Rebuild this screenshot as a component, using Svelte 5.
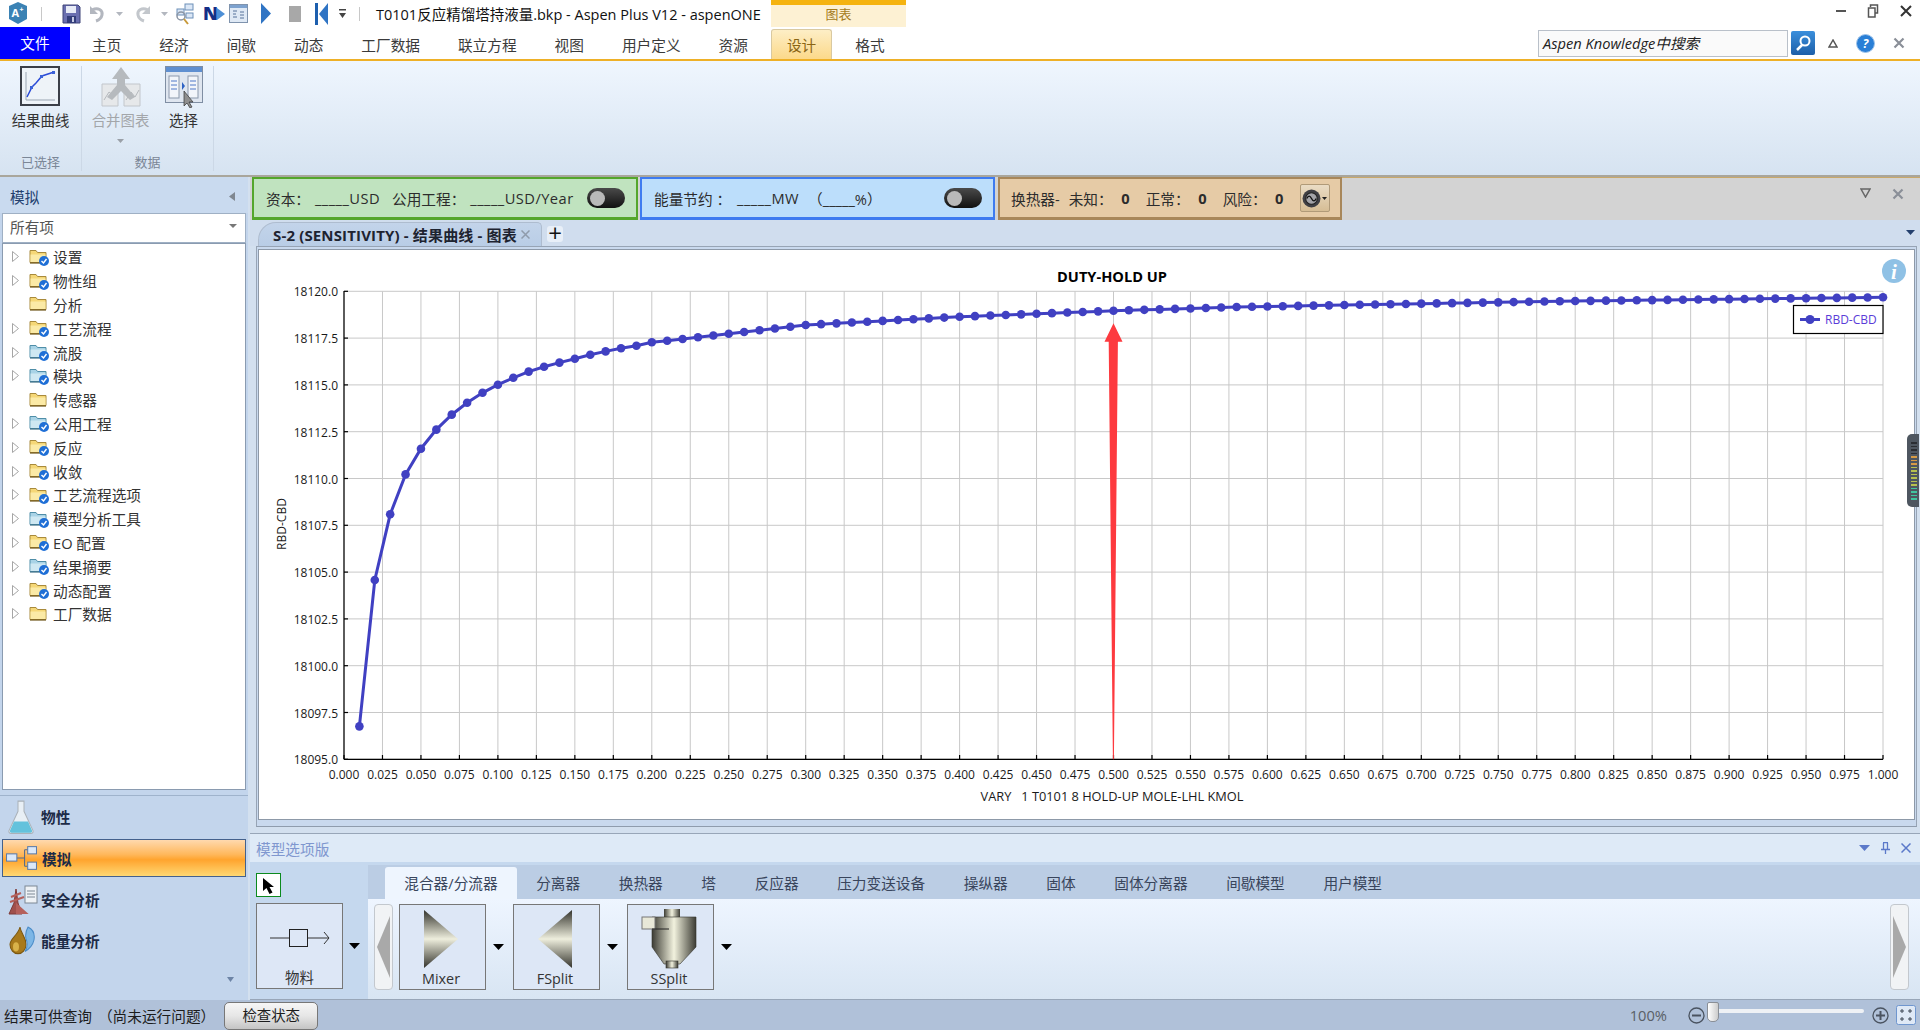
<script>
  const tabs = ['主页', '经济', '间歇', '动态', '工厂数据', '联立方程', '视图', '用户定义', '资源', '设计', '格式']
  const tree = [
    ['设置', 'y', true], ['物性组', 'y', true], ['分析', 'p', false], ['工艺流程', 'y', true],
    ['流股', 't', true], ['模块', 't', true], ['传感器', 'p', false], ['公用工程', 't', true],
    ['反应', 'y', true], ['收敛', 'y', true], ['工艺流程选项', 'y', true], ['模型分析工具', 't', true],
    ['EO 配置', 'y', true], ['结果摘要', 't', true], ['动态配置', 'y', true], ['工厂数据', 'p', true]
  ]
  const palTabs = ['混合器/分流器', '分离器', '换热器', '塔', '反应器', '压力变送设备', '操纵器', '固体', '固体分离器', '间歇模型', '用户模型']

  // plot area in page coordinates
  const X0 = 344, XW = 1539, Y0 = 759.3, YK = 18.72
  const px = (x) => X0 + x * XW
  const py = (v) => Y0 - (v - 18095) * YK

  const head = [18096.76, 18104.58, 18108.09, 18110.22, 18111.59, 18112.61, 18113.41, 18114.05, 18114.58, 18115.01,
    18115.38, 18115.71, 18115.97, 18116.19, 18116.4, 18116.61, 18116.79, 18116.96, 18117.09, 18117.28, 18117.36]
  const anchors = [[0.21, 18117.36], [0.3, 18118.2], [0.4, 18118.64], [0.5, 18118.96], [0.58, 18119.16], [0.7, 18119.34], [0.8, 18119.48], [1, 18119.68]]

  function valueAt(x) {
    for (let i = 1; i < anchors.length; i++) {
      if (x <= anchors[i][0]) {
        const [a, va] = anchors[i - 1]
        const [b, vb] = anchors[i]
        return va + ((x - a) / (b - a)) * (vb - va)
      }
    }
    return anchors[anchors.length - 1][1]
  }

  const points = []
  for (let i = 1; i <= 100; i++) {
    const x = i / 100
    points.push([px(x), py(i <= head.length ? head[i - 1] : valueAt(x))])
  }
  const line = points.map((p) => p[0].toFixed(1) + ',' + p[1].toFixed(1)).join(' ')
  const xTicks = Array.from({ length: 41 }, (_, i) => i * 0.025)
  const yTicks = Array.from({ length: 11 }, (_, i) => 18095 + i * 2.5)
</script>

{#snippet folder(kind)}
  <svg class="folder" width="20" height="18" viewBox="0 0 20 18">
    <path d="M1 14.500V2.500h6l1.500 2H17v10z" fill={kind === 't' ? '#a9d3e6' : '#f5d777'} stroke={kind === 't' ? '#4f8ea8' : '#a88a3c'} stroke-width="1" />
    <path d="M1.500 14V6.500h15V14z" fill={kind === 't' ? '#cfe8f2' : '#fbeaa6'} />
    <path d="M1 15h16" stroke={kind === 't' ? '#3d6f86' : '#6e5518'} stroke-width="1.200" />
    {#if kind !== 'p'}
      <circle cx="15" cy="13" r="5" fill="#1f6fd6" />
      <path d="M12.500 13l2 2 3-4" fill="none" stroke="#fff" stroke-width="1.400" />
    {/if}
  </svg>
{/snippet}

{#snippet drop()}
  <svg class="tri" width="11" height="6" viewBox="0 0 11 6"><path d="M0 0h11L5.500 6z" fill="#000" /></svg>
{/snippet}

{#snippet toggle()}
  <span class="toggle"><span class="knob"></span></span>
{/snippet}

{#snippet scroller(dir)}
  <span class="scroll-btn">
    <svg width="13" height="62" viewBox="0 0 13 62">
      <path d={dir === 'l' ? 'M13 0V62L0 31z' : 'M0 0V62L13 31z'} fill="#a9a9a9" />
    </svg>
  </span>
{/snippet}

<div class="app">
  <header class="titlebar">
    <svg class="q-logo" width="24" height="25" viewBox="0 0 24 25">
      <path d="M12 1l9 4v13l-9 5-9-5V5z" fill="#3b82b4" />
      <text x="5.500" y="16" font-size="11" font-weight="700" fill="#fff" font-family="Open Sans">A</text>
      <text x="13.500" y="11" font-size="7" font-weight="700" fill="#fff" font-family="Open Sans">+</text>
    </svg>
    <span class="q-sep q-sep1"></span>
    <svg class="q-save" width="19" height="20" viewBox="0 0 19 20">
      <path d="M1 1h15l2 2v16H1z" fill="#6a6fb0" stroke="#3e4478" />
      <rect x="4" y="2" width="10" height="7" fill="#e8ecf7" />
      <rect x="5" y="12" width="9" height="7" fill="#333d7a" /><rect x="10" y="13" width="2" height="5" fill="#c7cbe4" />
    </svg>
    <svg class="q-undo" width="16" height="18" viewBox="0 0 16 18">
      <path d="M3 5c6-3 11 0 10 5-.6 3-3 5-6 6" fill="none" stroke="#b3b7bf" stroke-width="3" /><path d="M1 1v8h8z" fill="#b3b7bf" />
    </svg>
    <svg class="q-dd1" width="7" height="4" viewBox="0 0 7 4"><path d="M0 0h7L3.500 4z" fill="#b3b7bf" /></svg>
    <svg class="q-redo" width="16" height="18" viewBox="0 0 16 18">
      <path d="M13 5C7 2 2 5 3 10c.6 3 3 5 6 6" fill="none" stroke="#c3c7cc" stroke-width="3" /><path d="M15 1v8H7z" fill="#c3c7cc" />
    </svg>
    <svg class="q-dd2" width="7" height="4" viewBox="0 0 7 4"><path d="M0 0h7L3.500 4z" fill="#b3b7bf" /></svg>
    <svg class="q-macro" width="20" height="22" viewBox="0 0 20 22">
      <rect x="10" y="1" width="8" height="6" fill="#dbe7f6" stroke="#6d8fb8" /><rect x="2" y="6" width="7" height="6" fill="#dbe7f6" stroke="#6d8fb8" /><rect x="11" y="10" width="7" height="5" fill="#dbe7f6" stroke="#6d8fb8" />
      <circle cx="6" cy="13" r="4" fill="none" stroke="#8a94a3" stroke-width="1.500" /><path d="M9 16l4 5" stroke="#c89a3a" stroke-width="2" />
    </svg>
    <svg class="q-n" width="23" height="26" viewBox="0 0 23 26">
      <text x="0" y="19" font-size="18" font-weight="800" fill="#142e86" font-family="Open Sans">N</text>
      <path d="M14 7l8 6-8 6z" fill="#4d8fd6" />
    </svg>
    <svg class="q-table" width="19" height="19" viewBox="0 0 19 19">
      <rect x=".5" y=".5" width="18" height="18" fill="#dfe9f5" stroke="#7f93ad" /><rect x="1" y="1" width="17" height="3" fill="#7da2cf" />
      <path d="M4 7h4M4 10h3M4 13h4M11 8h4M11 11h4M11 14h4" stroke="#56729a" />
    </svg>
    <svg class="q-play" width="10" height="21" viewBox="0 0 10 21"><path d="M0 0l10 10.500L0 21z" fill="#2f74c4" /></svg>
    <svg class="q-stop" width="12" height="16" viewBox="0 0 12 16"><rect width="12" height="16" fill="#a8a8a8" /></svg>
    <svg class="q-rew" width="13" height="22" viewBox="0 0 13 22"><rect width="3" height="22" fill="#1d5fae" /><path d="M13 0v22L4 11z" fill="#2f74c4" /></svg>
    <svg class="q-more" width="7" height="9" viewBox="0 0 7 9"><path d="M0 0h7v1.500H0zM0 4h7L3.500 9z" fill="#444" /></svg>
    <span class="q-sep q-sep2"></span>
    <span class="title">T0101反应精馏塔持液量.bkp - Aspen Plus V12 - aspenONE</span>
    <span class="context">图表</span>
    <span class="winbtns">
      <svg width="10" height="2" viewBox="0 0 10 2"><rect width="10" height="2" fill="#555" /></svg>
      <svg width="12" height="14" viewBox="0 0 12 14"><path d="M3.500 3V1h7v8H8M1.500 4h6.500v9h-6.500z" fill="none" stroke="#555" stroke-width="1.500" /></svg>
      <svg width="12" height="12" viewBox="0 0 12 12"><path d="M1 1l10 10M11 1L1 11" stroke="#333" stroke-width="2" /></svg>
    </span>
  </header>

  <nav class="tabbar">
    <span class="file-tab">文件</span>
    <div class="tabs">
      {#each tabs as t}
        <span class="tab" class:active={t === '设计'}>{t}</span>
      {/each}
    </div>
    <div class="search-area">
      <span class="search">Aspen Knowledge中搜索</span>
      <span class="search-btn">
        <svg width="18" height="18" viewBox="0 0 18 18"><circle cx="11" cy="7" r="4.500" fill="none" stroke="#fff" stroke-width="2" /><path d="M8 11l-5 5" stroke="#fff" stroke-width="2.500" /></svg>
      </span>
      <svg class="ic-up" width="10" height="9" viewBox="0 0 10 9"><path d="M5 1L1 8h8z" fill="none" stroke="#555" stroke-width="1.500" /></svg>
      <span class="help">?</span>
      <svg class="ic-x" width="12" height="12" viewBox="0 0 12 12"><path d="M1.500 1.500l9 9M10.500 1.500l-9 9" stroke="#8a8f98" stroke-width="2.200" /></svg>
    </div>
  </nav>

  <section class="ribbon">
    <div class="rgroup g1">
      <div class="rbtn b1">
        <svg width="40" height="40" viewBox="0 0 40 40">
          <rect x="1" y="1" width="38" height="38" fill="#eef3f8" stroke="#3b3f48" stroke-width="2" />
          <path d="M6 34h29M6 6v28" stroke="#9aa5b2" />
          <path d="M7 31l5-10 4-4 6-7 9-3 4-1" fill="none" stroke="#2b4bd8" stroke-width="1.500" />
          <rect x="10" y="20" width="3" height="3" fill="#3a62d8" /><rect x="20" y="9" width="3" height="3" fill="#3a62d8" /><rect x="32" y="5" width="3" height="3" fill="#3a62d8" />
        </svg>
        <span>结果曲线</span>
      </div>
      <span class="glabel">已选择</span>
    </div>
    <div class="rgroup g2">
      <div class="rbtns">
        <div class="rbtn b2 off">
          <svg width="40" height="42" viewBox="0 0 40 42">
            <path d="M1 18h16v22H1zM23 18h16v22H23z" fill="#e6e8ea" stroke="#c2c6cb" />
            <path d="M3 34l5-8 5 4 4-6M25 34l5-8 4 5 4-7" fill="none" stroke="#b5b9bd" />
            <path d="M20 1l9 12h-5v6l10 12-5 3-9-9-9 9-5-3 10-12v-6h-5z" fill="#b6babe" />
          </svg>
          <span>合并图表</span>
          <svg class="more" width="7" height="4" viewBox="0 0 7 4"><path d="M0 0h7L3.500 4z" fill="#9aa0a8" /></svg>
        </div>
        <div class="rbtn b3">
          <svg width="38" height="42" viewBox="0 0 38 42">
            <rect x=".5" y=".5" width="37" height="36" fill="#dfe6f0" stroke="#7f8ea3" />
            <rect x="1" y="1" width="36" height="5" fill="#5f8fd0" />
            <rect x="4" y="10" width="10" height="22" fill="#f2f5fa" stroke="#8b98ab" /><rect x="23" y="10" width="10" height="22" fill="#f2f5fa" stroke="#8b98ab" />
            <path d="M6 15h6M6 19h6M6 23h6M25 15h6M25 19h6M25 23h6" stroke="#4f78c8" />
            <path d="M17 16l3 4-3 4z" fill="#2e62c4" />
            <path d="M19 25v15l3-3 3 5 2-1-3-5h4z" fill="#8f8f8f" stroke="#333" stroke-width=".7" />
          </svg>
          <span>选择</span>
        </div>
      </div>
      <span class="glabel">数据</span>
    </div>
  </section>

  <main class="main">
    <aside class="side">
      <div class="side-head">
        <span>模拟</span>
        <svg width="7" height="9" viewBox="0 0 7 9"><path d="M6 0v9L0 4.500z" fill="#7f8790" /></svg>
      </div>
      <div class="side-select">
        <span>所有项</span>
        <svg width="8" height="4" viewBox="0 0 8 4"><path d="M0 0h8L4 4z" fill="#777" /></svg>
      </div>
      <ul class="tree">
        {#each tree as [label, kind, hasArrow]}
          <li>
            <span class="twisty">
              {#if hasArrow}
                <svg width="7" height="11" viewBox="0 0 7 11"><path d="M.5.500v10l6-5z" fill="#fff" stroke="#a6a6a6" /></svg>
              {/if}
            </span>
            {@render folder(kind)}
            <span class="tree-label">{label}</span>
          </li>
        {/each}
      </ul>
      <div class="nav-list">
        <div class="nav-item">
          <svg width="26" height="34" viewBox="0 0 26 30" preserveAspectRatio="none">
            <path d="M10 1h6v9l9 17c.5 1.500-.5 2.500-2 2.500H3C1.500 29.500.5 28.500 1 27l9-17z" fill="#e8eff5" stroke="#aab1b8" />
            <path d="M6 19h14l4 8c.4 1.200-.5 2-1.500 2h-19C2.500 29 1.600 28.200 2 27z" fill="#63c2dc" />
          </svg>
          <span>物性</span>
        </div>
        <div class="nav-item active">
          <svg width="31" height="26" viewBox="0 0 30 24">
            <path d="M10 12h8M18 4v16M18 4h4M18 20h4" stroke="#50698e" fill="none" />
            <rect x=".5" y="8" width="10" height="7" fill="#dbe8f8" stroke="#5c7ba8" /><rect x="21" y="1" width="8.500" height="7" fill="#dbe8f8" stroke="#5c7ba8" /><rect x="21" y="16" width="8.500" height="7" fill="#dbe8f8" stroke="#5c7ba8" />
          </svg>
          <span>模拟</span>
        </div>
        <div class="nav-item">
          <svg width="30" height="30" viewBox="0 0 30 30">
            <rect x="17" y="1" width="12" height="17" fill="#eef2f6" stroke="#7d8894" /><path d="M19 6h8M19 9h8M19 12h8" stroke="#7d8894" />
            <path d="M8 4l2 14 4 11H1L6 18z" fill="#a0504c" stroke="#7e3a38" />
            <path d="M3 12l10-4M2 17l14-5M9 20l9 8h-9z" stroke="#b5605b" stroke-width="2" fill="#b5605b" />
          </svg>
          <span>安全分析</span>
        </div>
        <div class="nav-item">
          <svg width="28" height="30" viewBox="0 0 28 26" preserveAspectRatio="none">
            <path d="M12 1c1 6 6 8 6 15a8 8 0 0 1-16 0C2 11 10 8 12 1z" fill="#a87a1c" stroke="#7c5810" />
            <path d="M20 1c5 2 7 6 6 11-1 4-5 8-9 10 3-4 3-7 1-11-1-4 0-7 2-10z" fill="#7cb6e6" stroke="#4a8cc8" />
            <ellipse cx="8" cy="18" rx="3" ry="4" fill="#d9b24a" />
          </svg>
          <span>能量分析</span>
        </div>
        <svg class="nav-more" width="7" height="5" viewBox="0 0 7 5"><path d="M0 0h7L3.500 5z" fill="#6d84a6" /></svg>
      </div>
    </aside>

    <div class="content">
      <div class="kpis">
        <div class="kpi green">
          <span class="k1">资本：</span><span class="k2">_____USD</span>
          <span class="k3">公用工程：</span><span class="k4">_____USD/Year</span>
          {@render toggle()}
        </div>
        <div class="kpi blue">
          <span class="k5">能量节约 ：</span><span class="k6">_____MW</span><span class="k7">（_____%）</span>
          {@render toggle()}
        </div>
        <div class="kpi tan">
          <span class="k8">换热器-</span><span class="k9">未知：</span><b>0</b><span class="k10">正常：</span><b>0</b><span class="k10">风险：</span><b>0</b>
          <span class="hx-btn">
            <svg width="19" height="19" viewBox="0 0 18 18">
              <circle cx="9" cy="9" r="8.500" fill="#3f3f44" /><circle cx="9" cy="9" r="5.500" fill="#a3a3a8" stroke="#222" />
              <path d="M4.500 9c1.500-3 3-3 4.500 0s3 3 4.500 0" fill="none" stroke="#111" stroke-width="1.300" />
            </svg>
            <svg width="5" height="3" viewBox="0 0 5 3"><path d="M0 0h5L2.500 3z" fill="#222" /></svg>
          </span>
        </div>
        <div class="kpi-rest">
          <svg width="11" height="10" viewBox="0 0 11 10"><path d="M1 1h9L5.500 9z" fill="none" stroke="#666" stroke-width="1.500" /></svg>
          <svg width="12" height="12" viewBox="0 0 12 12"><path d="M1.500 1.500l9 9M10.500 1.500l-9 9" stroke="#8a8f98" stroke-width="2.200" /></svg>
        </div>
      </div>

      <div class="doctabs">
        <div class="doctab">
          <span>S-2 (SENSITIVITY) - 结果曲线 - 图表</span>
          <svg width="9" height="9" viewBox="0 0 9 9"><path d="M.5.500l8 8M8.500.500l-8 8" stroke="#8f9bab" stroke-width="1.500" /></svg>
        </div>
        <span class="plus">+</span>
        <svg class="doc-more" width="9" height="5" viewBox="0 0 9 5"><path d="M0 0h9L4.500 5z" fill="#24406e" /></svg>
      </div>

      <div class="frame">
        <div class="frame-inner">
          <svg class="chart" width="1651" height="565" viewBox="259 254 1651 565">
            {#each xTicks as t}
              <line class="grid" x1={px(t)} x2={px(t)} y1="291.300" y2={Y0} />
            {/each}
            {#each yTicks as v}
              <line class="grid" x1={X0} x2={X0 + XW} y1={py(v)} y2={py(v)} />
            {/each}
            {#each xTicks as t}
              <line class="axis" x1={px(t)} x2={px(t)} y1="755" y2={Y0} />
              <text class="lbl" x={px(t)} y="779" text-anchor="middle">{t.toFixed(3)}</text>
            {/each}
            {#each yTicks as v}
              <line class="axis" x1={X0} x2={X0 + 4} y1={py(v)} y2={py(v)} />
              <text class="lbl" x="338" y={py(v) + 5} text-anchor="end">{v.toFixed(1)}</text>
            {/each}
            <line class="axis" x1={X0} x2={X0} y1="291" y2={Y0} />
            <line class="axis" x1={X0} x2={X0 + XW} y1={Y0} y2={Y0} />

            <polyline points={line} fill="none" stroke="#4040c2" stroke-width="3" />
            {#each points as p}
              <circle cx={p[0]} cy={p[1]} r="4.300" fill="#4040c2" />
            {/each}

            <path d="M1113.500 323.300l9 18.400h-4.600l-4 417.600h-1l-4.200-417.600h-4.200z" fill="#fd3a3f" />

            <text class="ttl" x="1112" y="282" text-anchor="middle">DUTY-HOLD UP</text>
            <text class="lbl xt" x="1112" y="801" text-anchor="middle" xml:space="preserve">VARY   1 T0101 8 HOLD-UP MOLE-LHL KMOL</text>
            <text class="lbl" transform="translate(286 524) rotate(-90)" text-anchor="middle">RBD-CBD</text>

            <rect x="1793.500" y="305.500" width="89.500" height="28" fill="#fff" stroke="#000" stroke-width="1.200" />
            <line x1="1800" x2="1820" y1="319.500" y2="319.500" stroke="#4040c2" stroke-width="3" />
            <circle cx="1810" cy="319.500" r="4.500" fill="#4040c2" />
            <text class="leg" x="1825" y="324">RBD-CBD</text>

            <circle cx="1894" cy="271" r="12" fill="#8fc1e5" />
            <text x="1894" y="279" text-anchor="middle" font-size="21" font-style="italic" font-weight="700" font-family="Liberation Serif" fill="#fff">i</text>
          </svg>
        </div>
        <div class="meter">
          {#each Array(17) as _, i}
            <i class:hot={i >= 4 && i < 7} class:mid={i >= 7 && i < 13} class:low={i >= 13}></i>
          {/each}
        </div>
      </div>

      <div class="palette">
        <div class="pal-title">
          <span>模型选项版</span>
          <div class="pal-icons">
            <svg width="11" height="6" viewBox="0 0 11 6"><path d="M0 0h11L5.500 6z" fill="#5b79c9" /></svg>
            <svg width="9" height="12" viewBox="0 0 9 12"><path d="M2 .5h5M2.500 1v6M6.500 1v6M0 7.500h9M4.500 8v4" stroke="#5b79c9" stroke-width="1.300" fill="none" /></svg>
            <svg width="10" height="10" viewBox="0 0 10 10"><path d="M.5.500l9 9M9.500.500l-9 9" stroke="#5b79c9" stroke-width="1.500" /></svg>
          </div>
        </div>
        <div class="pal-body">
          <div class="pal-left">
            <span class="pointer">
              <svg width="14" height="17" viewBox="0 0 14 17"><path d="M1 1v13l3.500-3 3 6 3-1.500-3-5.500H12z" fill="#000" /></svg>
            </span>
            <div class="model-row">
              <div class="model-box">
                <svg width="60" height="60" viewBox="0 -20 60 60">
                  <path d="M0 10h19M37 10h22M54 4l5 6-5 6" fill="none" stroke="#333" />
                  <rect x="19.500" y="1.500" width="18" height="17" fill="none" stroke="#222" />
                </svg>
                <span class="m-label">物料</span>
              </div>
              {@render drop()}
            </div>
          </div>
          <div class="pal-right">
            <div class="pal-tabs">
              {#each palTabs as t, i}
                <span class="ptab" class:on={i === 0}>{t}</span>
              {/each}
            </div>
            <div class="pal-items">
              {@render scroller('l')}
              <div class="model-row">
                <div class="model-box shift">
                  <svg width="36" height="60" viewBox="0 0 36 60">
                    <defs>
                      <linearGradient id="cone" x1="0" x2="0" y1="0" y2="1">
                        <stop offset="0" stop-color="#33332c" /><stop offset=".5" stop-color="#eeeedd" /><stop offset="1" stop-color="#33332c" />
                      </linearGradient>
                      <linearGradient id="cyl" x1="0" x2="1" y1="0" y2="0">
                        <stop offset="0" stop-color="#3c3c34" /><stop offset=".5" stop-color="#f2f2de" /><stop offset="1" stop-color="#3c3c34" />
                      </linearGradient>
                    </defs>
                    <path d="M1 1l34 29L1 59z" fill="url(#cone)" />
                  </svg>
                  <span class="m-label">Mixer</span>
                </div>
                {@render drop()}
              </div>
              <div class="model-row">
                <div class="model-box shift">
                  <svg width="36" height="60" viewBox="0 0 36 60"><path d="M35 1L1 30l34 29z" fill="url(#cone)" /></svg>
                  <span class="m-label">FSplit</span>
                </div>
                {@render drop()}
              </div>
              <div class="model-row">
                <div class="model-box shift">
                  <svg width="56" height="60" viewBox="0 0 56 60">
                    <rect x="23" y="0" width="16" height="8" fill="url(#cyl)" />
                    <path d="M11 8h44v30L39 55H23L11 38z" fill="url(#cyl)" stroke="#33332c" stroke-width=".6" />
                    <rect x="25" y="52" width="12" height="7" fill="url(#cyl)" stroke="#33332c" stroke-width=".6" />
                    <rect x="1" y="8" width="13" height="12" fill="#e8e8d8" stroke="#777" />
                    <path d="M11 20h17" stroke="#222" />
                  </svg>
                  <span class="m-label">SSplit</span>
                </div>
                {@render drop()}
              </div>
              {@render scroller('r')}
            </div>
          </div>
        </div>
      </div>
    </div>
  </main>

  <footer class="status">
    <span class="st-text">结果可供查询</span>
    <span class="st-note">（尚未运行问题）</span>
    <span class="st-btn">检查状态</span>
    <div class="zoom">
      <span class="pct">100%</span>
      <svg class="zc" width="17" height="17" viewBox="0 0 17 17"><circle cx="8.500" cy="8.500" r="7.500" fill="none" stroke="#4a5360" stroke-width="1.300" /><path d="M4 8.500h9" stroke="#4a5360" stroke-width="2" /></svg>
      <div class="slider"><span class="thumb"></span></div>
      <svg class="zc" width="17" height="17" viewBox="0 0 17 17"><circle cx="8.500" cy="8.500" r="7.500" fill="none" stroke="#4a5360" stroke-width="1.300" /><path d="M4 8.500h9M8.500 4v9" stroke="#4a5360" stroke-width="2" /></svg>
      <svg class="fit" width="20" height="20" viewBox="0 0 20 20">
        <rect x=".5" y=".5" width="19" height="19" rx="2" fill="#dfe9f6" stroke="#6f96cf" />
        <path d="M6 4v4M4 6h4M14 4v4M12 6h4M6 12v4M4 14h4M14 12v4M12 14h4" stroke="#3c4654" />
      </svg>
    </div>
  </footer>
</div>

<style>
  :global(body) {
    margin: 0;
    background: #d3e0ef;
  }

  .app {
    --font: "Open Sans", "Noto Sans CJK SC", sans-serif;
    width: 1920px;
    height: 1030px;
    overflow: hidden;
    display: flex;
    flex-direction: column;
    font-family: var(--font);
    font-size: 14.67px;
    color: #2b2b2b;
  }

  /* title bar */
  .titlebar {
    height: 27px;
    flex: none;
    display: flex;
    align-items: center;
    background: #fff;
    position: relative;
  }
  .titlebar svg { flex: none; }
  .q-logo { margin-left: 6px; }
  .q-sep { width: 1px; height: 14px; background: #c8c8c8; flex: none; }
  .q-sep1 { margin-left: 11px; }
  .q-save { margin-left: 20px; }
  .q-undo { margin-left: 8px; }
  .q-dd1 { margin-left: 11px; }
  .q-redo { margin-left: 12px; }
  .q-dd2 { margin-left: 10px; }
  .q-macro { margin-left: 7px; }
  .q-n { margin-left: 8px; }
  .q-table { margin-left: 3px; }
  .q-play { margin-left: 13px; }
  .q-stop { margin-left: 18px; }
  .q-rew { margin-left: 14px; }
  .q-more { margin-left: 11px; }
  .q-sep2 { margin-left: 13px; }
  .title {
    margin-left: 16px;
    font-size: 14.5px;
    color: #111;
    white-space: nowrap;
    width: 395px;
  }
  .context {
    width: 135px;
    height: 22px;
    border-top: 5px solid #f5b30f;
    background: #fdf1d3;
    color: #a57c1c;
    font-size: 13px;
    text-align: center;
    line-height: 19px;
    flex: none;
  }
  .winbtns {
    margin-left: auto;
    display: flex;
    align-items: center;
    gap: 21px;
    padding: 0 8px 6px 0;
  }

  /* tab row */
  .tabbar {
    height: 34px;
    flex: none;
    display: flex;
    align-items: flex-end;
    background: #fff;
    border-bottom: 2px solid #eeb027;
    box-sizing: border-box;
    position: relative;
  }
  .file-tab {
    width: 70px;
    height: 32px;
    background: #0000ff;
    color: #fff;
    text-align: center;
    line-height: 33px;
    flex: none;
  }
  .tabs {
    display: flex;
    margin-left: 3px;
  }
  .tab {
    padding: 0 19px;
    height: 30px;
    line-height: 32px;
    color: #3a3a3a;
    white-space: nowrap;
    border-radius: 3px 3px 0 0;
    box-sizing: border-box;
  }
  .tab.active {
    padding: 0 15px;
    margin: 0 4px;
    color: #8a6514;
    background: linear-gradient(#fdeec6, #fcd98a);
    border: 1px solid #d9c9a0;
    border-bottom: none;
    line-height: 30px;
  }
  .search-area {
    margin-left: auto;
    display: flex;
    align-items: center;
    align-self: flex-start;
    height: 32px;
  }
  .search {
    width: 250px;
    height: 27px;
    box-sizing: border-box;
    border: 1px solid #b9c0c9;
    background: #fafafa;
    font-style: italic;
    font-size: 14.67px;
    line-height: 25px;
    padding-left: 4px;
    white-space: nowrap;
    overflow: hidden;
    color: #222;
  }
  .search-btn {
    margin-left: 3px;
    width: 24px;
    height: 24px;
    background: linear-gradient(#3b8fdc, #1d5fa8);
    border-radius: 2px;
    display: flex;
    align-items: center;
    justify-content: center;
  }
  .ic-up { margin-left: 13px; }
  .help {
    margin-left: 18px;
    width: 17px;
    height: 17px;
    border-radius: 50%;
    background: #2a7fd6;
    border: 1px solid #9ec3ea;
    color: #fff;
    font-size: 12px;
    font-weight: 700;
    font-style: italic;
    text-align: center;
    line-height: 17px;
  }
  .ic-x { margin: 0 15px 0 18px; }

  /* ribbon */
  .ribbon {
    height: 116px;
    flex: none;
    display: flex;
    box-sizing: border-box;
    background: linear-gradient(#eff6fe, #d6e3f1);
    border-bottom: 2px solid #a9a69c;
  }
  .rgroup {
    display: flex;
    flex-direction: column;
    align-items: center;
    border-right: 1px solid #ccd8e6;
    margin-top: 5px;
    height: 105px;
  }
  .g1 { width: 81px; }
  .g2 { width: 131px; }
  .rbtns { display: flex; height: 92px; margin-left: -6px; }
  .rbtn {
    display: flex;
    flex-direction: column;
    align-items: center;
    font-size: 14.4px;
    color: #333;
    white-space: nowrap;
  }
  .rbtn span { margin-top: 5px; line-height: 20px; }
  .b1 { height: 92px; }
  .b2 { width: 80px; }
  .b2 span, .b3 span { margin-top: 3px; }
  .b3 { width: 50px; margin-left: -2px; }
  .off { color: #a3a6aa; }
  .more { margin-top: 8px; }
  .glabel {
    font-size: 13px;
    color: #7b8797;
    line-height: 18px;
    margin-top: 1px;
  }

  /* main area */
  .main {
    flex: 1;
    display: flex;
    min-height: 0;
  }
  .side {
    width: 248px;
    flex: none;
    margin-right: 2px;
    display: flex;
    flex-direction: column;
    background: #c3d5ec;
  }
  .side-head {
    height: 36px;
    flex: none;
    display: flex;
    align-items: center;
    justify-content: space-between;
    padding: 2px 12px 0 10px;
    box-sizing: border-box;
    color: #22406e;
    background: #c9daef;
  }
  .side-select {
    height: 30px;
    flex: none;
    box-sizing: border-box;
    margin: 0 2px;
    background: #fff;
    border: 1px solid #9fb0c4;
    display: flex;
    align-items: center;
    justify-content: space-between;
    padding: 0 8px 4px 7px;
    color: #555;
  }
  .tree {
    margin: 0 2px;
    padding: 1px 0 0;
    list-style: none;
    height: 547px;
    flex: none;
    box-sizing: border-box;
    background: #fff;
    border: 1px solid #8a9bb0;
  }
  .tree li {
    height: 23.8px;
    display: flex;
    align-items: center;
  }
  .twisty {
    width: 26px;
    display: flex;
    padding-left: 9px;
    box-sizing: border-box;
    flex: none;
  }
  .folder { flex: none; }
  .tree-label {
    margin-left: 4px;
    color: #333;
    white-space: nowrap;
  }
  .nav-list {
    flex: 1;
    margin-top: 5px;
    border-top: 1px solid #9fb3cc;
    padding: 0 2px;
    position: relative;
  }
  .nav-item {
    height: 41px;
    display: flex;
    align-items: center;
    position: relative;
    font-weight: 700;
    color: #1d2b47;
    padding-left: 6px;
    box-sizing: border-box;
  }
  .nav-item span {
    position: absolute;
    left: 39px;
  }
  .nav-item.active {
    height: 38px;
    margin: 2px 0;
    border: 1px solid #44618c;
    background: linear-gradient(#ffd9ae, #ffb85c 40%, #ffa42e 55%, #ffd873);
    padding-left: 3px;
  }
  .nav-more {
    position: absolute;
    right: 14px;
    bottom: 18px;
  }

  /* right side */
  .content {
    flex: 1;
    min-width: 0;
    display: flex;
    flex-direction: column;
  }
  .kpis {
    height: 43px;
    flex: none;
    display: flex;
    background: #d3d3d3;
    font-size: 14.67px;
    color: #2c2c2c;
    padding-left: 2px;
  }
  .kpi {
    display: flex;
    align-items: center;
    box-sizing: border-box;
    white-space: pre;
    border-style: solid;
    border-width: 2px 2px 3px;
  }
  .green {
    width: 386px;
    background: #c0e3bf;
    border-color: #54a62b;
    padding-left: 12px;
  }
  .blue {
    width: 355px;
    margin-left: 2px;
    background: #bcdefb;
    border-color: #3e7bf0;
    padding-left: 12px;
  }
  .tan {
    width: 344px;
    margin-left: 3px;
    background: #e6cba6;
    border-color: #a8875a;
    padding-left: 11px;
  }
  .tan b { font-weight: 700; width: 25px; margin-left: 8.500px; }
  .k2, .k4, .k6 { letter-spacing: .45px; }
  .k2 { margin-left: 5px; }
  .k3 { margin-left: 12px; }
  .k4 { margin-left: 5px; }
  .green .toggle { margin-left: auto; margin-right: 11px; }
  .blue .toggle { margin-left: auto; margin-right: 11px; }
  .k6 { margin-left: 6px; }
  .k7 { margin-left: 9px; }
  .k9 { margin-left: 9px; }
  .toggle {
    width: 38px;
    height: 20px;
    border-radius: 10px;
    background: linear-gradient(#4a4a4a, #111);
    display: flex;
    align-items: center;
    flex: none;
  }
  .knob {
    width: 15px;
    height: 15px;
    border-radius: 50%;
    margin-left: 3px;
    background: #b9b9b9;
  }
  .hx-btn {
    margin-left: auto;
    margin-right: 10px;
    width: 31px;
    height: 28px;
    box-sizing: border-box;
    border: 1px solid #b09a78;
    background: linear-gradient(#eadcc5, #d6bd95);
    border-radius: 2px;
    display: flex;
    align-items: center;
    justify-content: center;
    gap: 1px;
  }
  .kpi-rest {
    flex: 1;
    display: flex;
    align-items: flex-start;
    justify-content: flex-end;
    gap: 21px;
    padding: 10px 16px 0 0;
    border-top: 1px solid #c9a86a;
    box-sizing: border-box;
  }

  .doctabs {
    height: 26px;
    flex: none;
    display: flex;
    align-items: flex-end;
    background: #d0ddee;
    position: relative;
  }
  .doctab {
    margin-left: 8px;
    width: 284px;
    height: 24px;
    box-sizing: border-box;
    padding-left: 14px;
    display: flex;
    align-items: center;
    justify-content: space-between;
    padding-right: 11px;
    background: linear-gradient(#c3d4ea, #b9cde6);
    border: 1px solid #aebccf;
    border-bottom: none;
    border-radius: 18px 5px 0 0;
    font-weight: 700;
    font-size: 15px;
    letter-spacing: .15px;
    color: #1e2330;
    white-space: nowrap;
  }
  .plus {
    margin: 0 0 4px 5px;
    width: 16px;
    height: 16px;
    background: #e8eff8;
    border-radius: 3px;
    font-size: 24px;
    line-height: 14px;
    text-align: center;
    color: #111;
  }
  .doc-more {
    position: absolute;
    right: 5px;
    top: 10px;
  }

  .frame {
    height: 581px;
    flex: none;
    box-sizing: border-box;
    margin: 0 3px 0 6px;
    padding: 2px 1px;
    background: #c9d9ee;
    border: 1px solid #97a4b5;
    border-bottom-color: #8f9cad;
    position: relative;
  }
  .frame-inner {
    background: #fff;
    border: 1px solid #8d99a8;
    height: 571px;
    box-sizing: border-box;
    overflow: hidden;
    padding-top: 4px;
  }
  .chart { display: block; }
  .grid { stroke: #c8c8c8; stroke-width: 1; }
  .axis { stroke: #000; stroke-width: 1.200; }
  .lbl {
    font-family: "Open Sans", sans-serif;
    font-size: 12px;
    fill: #1a1a1a;
    white-space: pre;
  }
  .xt { font-size: 12.8px; }
  .ttl {
    font-family: "Open Sans", sans-serif;
    font-size: 14.6px;
    font-weight: 700;
    fill: #000;
  }
  .leg {
    font-family: "Open Sans", sans-serif;
    font-size: 12px;
    fill: #5a3cd8;
  }
  .meter {
    position: absolute;
    right: -3px;
    top: 187px;
    width: 12px;
    height: 73px;
    box-sizing: border-box;
    padding: 8px 2px 0 4px;
    background: #4e5660;
    border-radius: 5px 0 0 5px;
    display: flex;
    flex-direction: column;
    gap: 2px;
  }
  .meter i { height: 1.500px; background: #2a2d33; flex: none; }
  .meter i.hot { background: #d69a45; }
  .meter i.mid { background: #b6c04e; }
  .meter i.low { background: #3fc4a0; }

  /* model palette */
  .palette {
    height: 167px;
    flex: none;
    margin-top: 6px;
    box-sizing: border-box;
    border-top: 1px solid #98a6b8;
    border-bottom: 1px solid #98a6b8;
    background: #c5d8ee;
    display: flex;
    flex-direction: column;
  }
  .pal-title {
    height: 28px;
    flex: none;
    display: flex;
    align-items: center;
    justify-content: space-between;
    padding: 0 9px 0 6px;
    background: #deeaf7;
    color: #7f97cf;
    font-size: 14.67px;
  }
  .pal-icons {
    display: flex;
    align-items: center;
    gap: 11px;
  }
  .pal-body {
    flex: 1;
    display: flex;
    min-height: 0;
  }
  .pal-left {
    width: 118px;
    flex: none;
    padding: 11px 0 0 6px;
    box-sizing: border-box;
  }
  .pointer {
    width: 25px;
    height: 24px;
    box-sizing: border-box;
    border: 1px solid #0c8a1e;
    background: #fff;
    display: flex;
    align-items: center;
    justify-content: center;
    margin-bottom: 6px;
  }
  .pal-right {
    flex: 1;
    min-width: 0;
    margin-top: 3px;
    display: flex;
    flex-direction: column;
    background: #bbcde4;
  }
  .pal-tabs {
    height: 34px;
    flex: none;
    display: flex;
    align-items: flex-end;
    padding-left: 17px;
    font-size: 14.67px;
    color: #39455c;
  }
  .ptab {
    height: 32px;
    line-height: 32px;
    padding: 0 19.3px;
    white-space: nowrap;
  }
  .ptab.on {
    background: #eef5fe;
    border-radius: 3px 3px 0 0;
  }
  .pal-items {
    flex: 1;
    display: flex;
    align-items: flex-start;
    padding: 5px 11px 0 6px;
    background: linear-gradient(#eef5ff, #d8e5f3);
  }
  .model-row {
    display: flex;
    align-items: center;
    flex: none;
  }
  .model-box {
    width: 87px;
    height: 86px;
    box-sizing: border-box;
    border: 1px solid #777;
    background: #dde7f6;
    display: flex;
    flex-direction: column;
    align-items: center;
    padding-top: 4px;
    flex: none;
  }
  .model-box.shift { padding-right: 3px; }
  .model-box svg { flex: none; height: 60px; }
  .m-label {
    font-size: 14.4px;
    line-height: 20px;
    color: #333;
  }
  .tri { margin: 0 9px 0 6px; flex: none; }
  .pal-items .tri { margin: 0 9px 0 7px; }
  .scroll-btn {
    width: 19px;
    height: 86px;
    box-sizing: border-box;
    border: 1px solid #c3c8ce;
    border-radius: 4px;
    background: #f1f3f5;
    display: flex;
    align-items: center;
    justify-content: center;
    flex: none;
    margin-right: 6px;
  }
  .pal-items .scroll-btn:last-child {
    margin: 0 0 0 auto;
  }

  /* status bar */
  .status {
    height: 30px;
    flex: none;
    display: flex;
    align-items: center;
    background: #b0c1d9;
    color: #1c1c1c;
    white-space: nowrap;
  }
  .st-text { margin-left: 4px; }
  .st-note { margin-left: 6px; }
  .st-btn {
    margin-left: 9px;
    width: 94px;
    height: 28px;
    margin-top: 2px;
    box-sizing: border-box;
    border: 1px solid #777;
    border-radius: 5px;
    background: linear-gradient(#f6f6f6, #e6e6e6 50%, #c4c4c4);
    text-align: center;
    line-height: 26px;
    font-size: 14.4px;
  }
  .zoom {
    margin-left: auto;
    display: flex;
    align-items: center;
    padding-right: 4px;
  }
  .pct { color: #5a5f66; font-size: 14.67px; margin-right: 21px; }
  .slider {
    width: 156px;
    height: 4px;
    margin: 0 8px 8px 3px;
    background: #eef1f5;
    border-radius: 2px;
    position: relative;
  }
  .thumb {
    position: absolute;
    left: -1px;
    top: -7px;
    width: 12px;
    height: 20px;
    background: linear-gradient(90deg, #fff, #ccc);
    border: 1px solid #8a8f96;
    border-radius: 2px 2px 5px 5px;
    box-sizing: border-box;
  }
  .fit { margin-left: 7px; }
</style>
